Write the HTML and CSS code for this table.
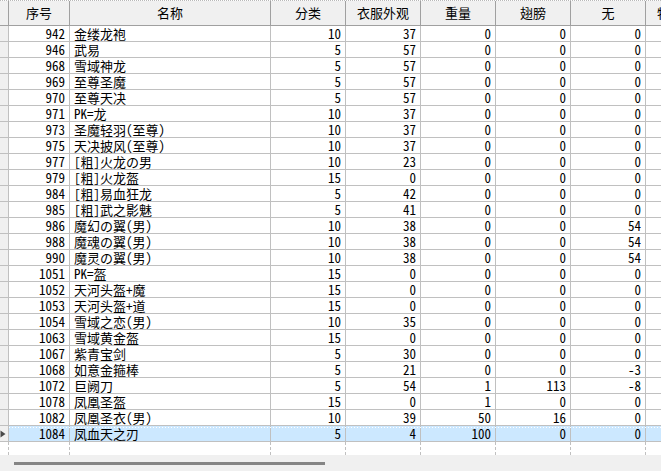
FILE: index.html
```html
<!DOCTYPE html>
<html>
<head>
<meta charset="utf-8">
<link rel="stylesheet" href="styles.css">
</head>
<body>
<div class="view">
  <div class="grid">
    <div class="head">
      <div class="h rh"></div>
      <div class="h">序号</div>
      <div class="h">名称</div>
      <div class="h">分类</div>
      <div class="h">衣服外观</div>
      <div class="h">重量</div>
      <div class="h">翅膀</div>
      <div class="h">无</div>
      <div class="h">特殊属性</div>
    </div>
    <div class="row"><div class="c rh"></div><div class="c n">942</div><div class="c">金缕龙袍</div><div class="c n">10</div><div class="c n">37</div><div class="c n">0</div><div class="c n">0</div><div class="c n">0</div><div class="c n"></div></div>
    <div class="row"><div class="c rh"></div><div class="c n">946</div><div class="c">武易</div><div class="c n">5</div><div class="c n">57</div><div class="c n">0</div><div class="c n">0</div><div class="c n">0</div><div class="c n"></div></div>
    <div class="row"><div class="c rh"></div><div class="c n">968</div><div class="c">雪域神龙</div><div class="c n">5</div><div class="c n">57</div><div class="c n">0</div><div class="c n">0</div><div class="c n">0</div><div class="c n"></div></div>
    <div class="row"><div class="c rh"></div><div class="c n">969</div><div class="c">至尊圣魔</div><div class="c n">5</div><div class="c n">57</div><div class="c n">0</div><div class="c n">0</div><div class="c n">0</div><div class="c n"></div></div>
    <div class="row"><div class="c rh"></div><div class="c n">970</div><div class="c">至尊天决</div><div class="c n">5</div><div class="c n">57</div><div class="c n">0</div><div class="c n">0</div><div class="c n">0</div><div class="c n"></div></div>
    <div class="row"><div class="c rh"></div><div class="c n">971</div><div class="c">PK=龙</div><div class="c n">10</div><div class="c n">37</div><div class="c n">0</div><div class="c n">0</div><div class="c n">0</div><div class="c n"></div></div>
    <div class="row"><div class="c rh"></div><div class="c n">973</div><div class="c">圣魔轻羽(至尊)</div><div class="c n">10</div><div class="c n">37</div><div class="c n">0</div><div class="c n">0</div><div class="c n">0</div><div class="c n"></div></div>
    <div class="row"><div class="c rh"></div><div class="c n">975</div><div class="c">天决披风(至尊)</div><div class="c n">10</div><div class="c n">37</div><div class="c n">0</div><div class="c n">0</div><div class="c n">0</div><div class="c n"></div></div>
    <div class="row"><div class="c rh"></div><div class="c n">977</div><div class="c">[粗]火龙の男</div><div class="c n">10</div><div class="c n">23</div><div class="c n">0</div><div class="c n">0</div><div class="c n">0</div><div class="c n"></div></div>
    <div class="row"><div class="c rh"></div><div class="c n">979</div><div class="c">[粗]火龙盔</div><div class="c n">15</div><div class="c n">0</div><div class="c n">0</div><div class="c n">0</div><div class="c n">0</div><div class="c n"></div></div>
    <div class="row"><div class="c rh"></div><div class="c n">984</div><div class="c">[粗]易血狂龙</div><div class="c n">5</div><div class="c n">42</div><div class="c n">0</div><div class="c n">0</div><div class="c n">0</div><div class="c n"></div></div>
    <div class="row"><div class="c rh"></div><div class="c n">985</div><div class="c">[粗]武之影魅</div><div class="c n">5</div><div class="c n">41</div><div class="c n">0</div><div class="c n">0</div><div class="c n">0</div><div class="c n"></div></div>
    <div class="row"><div class="c rh"></div><div class="c n">986</div><div class="c">魔幻の翼(男)</div><div class="c n">10</div><div class="c n">38</div><div class="c n">0</div><div class="c n">0</div><div class="c n">54</div><div class="c n"></div></div>
    <div class="row"><div class="c rh"></div><div class="c n">988</div><div class="c">魔魂の翼(男)</div><div class="c n">10</div><div class="c n">38</div><div class="c n">0</div><div class="c n">0</div><div class="c n">54</div><div class="c n"></div></div>
    <div class="row"><div class="c rh"></div><div class="c n">990</div><div class="c">魔灵の翼(男)</div><div class="c n">10</div><div class="c n">38</div><div class="c n">0</div><div class="c n">0</div><div class="c n">54</div><div class="c n"></div></div>
    <div class="row"><div class="c rh"></div><div class="c n">1051</div><div class="c">PK=盔</div><div class="c n">15</div><div class="c n">0</div><div class="c n">0</div><div class="c n">0</div><div class="c n">0</div><div class="c n"></div></div>
    <div class="row"><div class="c rh"></div><div class="c n">1052</div><div class="c">天河头盔+魔</div><div class="c n">15</div><div class="c n">0</div><div class="c n">0</div><div class="c n">0</div><div class="c n">0</div><div class="c n"></div></div>
    <div class="row"><div class="c rh"></div><div class="c n">1053</div><div class="c">天河头盔+道</div><div class="c n">15</div><div class="c n">0</div><div class="c n">0</div><div class="c n">0</div><div class="c n">0</div><div class="c n"></div></div>
    <div class="row"><div class="c rh"></div><div class="c n">1054</div><div class="c">雪域之恋(男)</div><div class="c n">10</div><div class="c n">35</div><div class="c n">0</div><div class="c n">0</div><div class="c n">0</div><div class="c n"></div></div>
    <div class="row"><div class="c rh"></div><div class="c n">1063</div><div class="c">雪域黄金盔</div><div class="c n">15</div><div class="c n">0</div><div class="c n">0</div><div class="c n">0</div><div class="c n">0</div><div class="c n"></div></div>
    <div class="row"><div class="c rh"></div><div class="c n">1067</div><div class="c">紫青宝剑</div><div class="c n">5</div><div class="c n">30</div><div class="c n">0</div><div class="c n">0</div><div class="c n">0</div><div class="c n"></div></div>
    <div class="row"><div class="c rh"></div><div class="c n">1068</div><div class="c">如意金箍棒</div><div class="c n">5</div><div class="c n">21</div><div class="c n">0</div><div class="c n">0</div><div class="c n">-3</div><div class="c n"></div></div>
    <div class="row"><div class="c rh"></div><div class="c n">1072</div><div class="c">巨阙刀</div><div class="c n">5</div><div class="c n">54</div><div class="c n">1</div><div class="c n">113</div><div class="c n">-8</div><div class="c n"></div></div>
    <div class="row"><div class="c rh"></div><div class="c n">1078</div><div class="c">凤凰圣盔</div><div class="c n">15</div><div class="c n">0</div><div class="c n">1</div><div class="c n">0</div><div class="c n">0</div><div class="c n"></div></div>
    <div class="row"><div class="c rh"></div><div class="c n">1082</div><div class="c">凤凰圣衣(男)</div><div class="c n">10</div><div class="c n">39</div><div class="c n">50</div><div class="c n">16</div><div class="c n">0</div><div class="c n"></div></div>
    <div class="row sel"><div class="c rh"><svg class="marker" width="6" height="8" viewBox="0 0 6 8"><polygon points="0.5,0.5 5.5,4 0.5,7.5" fill="#4a4a4a"/></svg></div><div class="c n">1084</div><div class="c">凤血天之刃</div><div class="c n">5</div><div class="c n">4</div><div class="c n">100</div><div class="c n">0</div><div class="c n">0</div><div class="c n"></div></div>
    <div class="fill"><div class="f"></div><div class="f"></div><div class="f"></div><div class="f"></div><div class="f"></div><div class="f"></div><div class="f"></div><div class="f"></div><div class="f"></div></div>
  </div>
  <div class="hscroll"><div class="thumb"></div></div>
</div>
</body>
</html>
```

FILE: styles.css
```css
html, body {
  margin: 0;
  padding: 0;
  background: #ffffff;
}

.view {
  width: 661px;
  height: 471px;
  overflow: hidden;
  font-family: "Noto Sans Mono CJK SC", "Noto Sans CJK SC", "DejaVu Sans Mono", monospace;
  font-size: 13px;
  color: #000;
}

.grid {
  width: 661px;
  overflow: hidden;
  border-top: 1px dotted #b8b8b8;
}

.head,
.row,
.fill {
  display: grid;
  grid-template-columns: 9px 61px 201px repeat(6, 75px);
  width: 721px;
}

.head {
  height: 25px;
  background: #f0f0f0;
}

.h {
  box-sizing: border-box;
  border-right: 1px solid #a0a0a0;
  border-bottom: 1px solid #a0a0a0;
  text-align: center;
  line-height: 24px;
  white-space: nowrap;
}

.row {
  height: 16px;
  position: relative;
}

.c {
  box-sizing: border-box;
  border-right: 1px solid #c0c0c0;
  border-bottom: 1px solid #c0c0c0;
  padding: 0 4px;
  line-height: 15px;
  white-space: nowrap;
  background: #ffffff;
}

.n {
  text-align: right;
}

.rh {
  background: #f0f0f0;
  padding: 0;
  display: flex;
  align-items: center;
  justify-content: flex-start;
}

.h.rh {
  background: #f0f0f0;
}

.sel .c:not(.rh) {
  background: #cce8ff;
}

.sel::after {
  content: "";
  position: absolute;
  left: 9px;
  right: 0;
  top: 1px;
  height: 1px;
  background-image: repeating-linear-gradient(90deg, #ffffff 0 1px, transparent 1px 3px);
}

.marker {
  display: block;
}

.fill {
  height: 13px;
}

.f {
  box-sizing: border-box;
  border-right: 1px dashed #c0c0c0;
  background: #ffffff;
}

.hscroll {
  height: 16px;
  background: #f0f0f0;
  padding-top: 7px;
  box-sizing: border-box;
}

.thumb {
  margin-left: 14px;
  width: 311px;
  height: 3px;
  background: #858585;
}
```
